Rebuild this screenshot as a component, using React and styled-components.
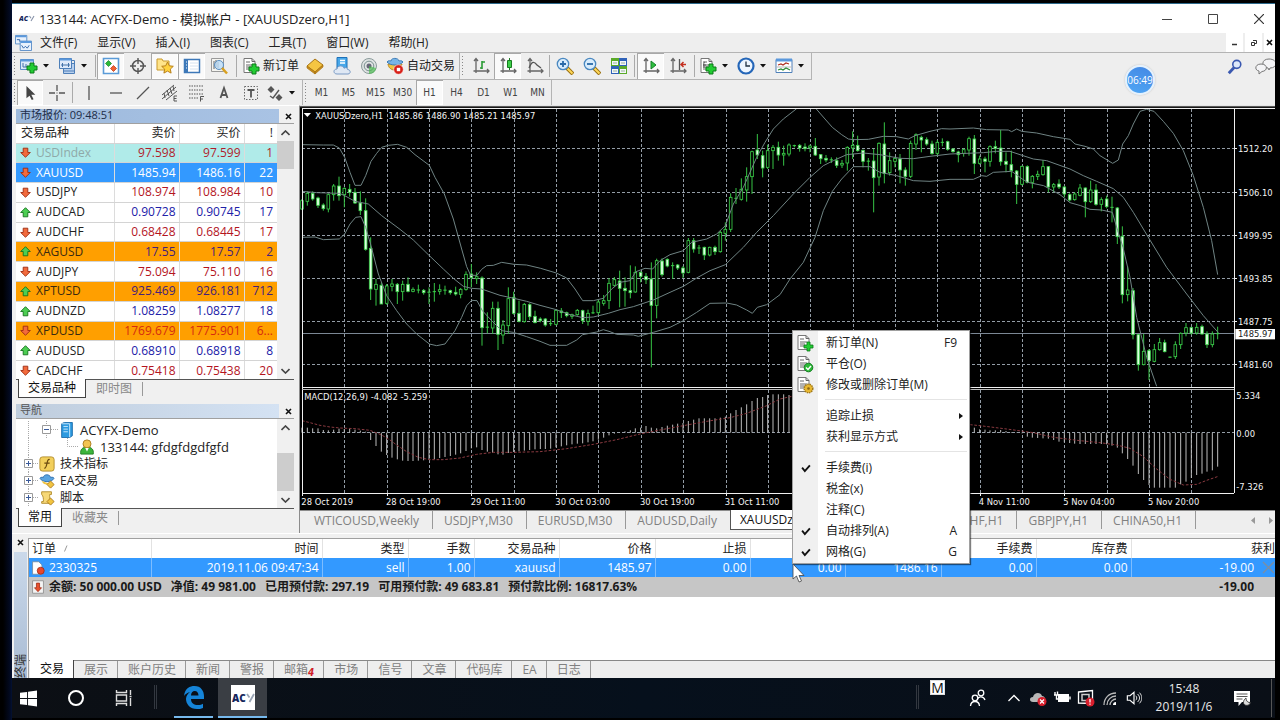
import React from "react";
import styled, { createGlobalStyle, css } from "styled-components";

const UI = `"Open Sans", "Noto Sans", "Noto Sans CJK SC", sans-serif`;
const SMALL = `"DejaVu Sans Condensed", "DejaVu Sans", "Noto Sans CJK SC", sans-serif`;

const Global = createGlobalStyle`
  * { box-sizing: border-box; }
  body { margin: 0; background: #000; font: 12px/16px ${UI}; color: #222; overflow-x: hidden; }
  button { font: inherit; color: inherit; background: none; border: 0; padding: 0; margin: 0; }
  svg { display: block; flex: none; }
  a { color: inherit; text-decoration: none; }
`;

/* ---------- shell ---------- */
const Desktop = styled.div`
  position: relative;
  min-height: 100vh;
  padding: 3px 5px 2px 12px;
  background: linear-gradient(90deg, #000 3px, #020a22 10px, #031133 12px, #000 12px);
  display: flex;
  flex-direction: column;
  overflow: hidden;
`;
const Window = styled.div`
  flex: 1;
  display: flex;
  flex-direction: column;
  background: #f0f0f0;
  border-top: 1px solid #2d6a8c;
  min-width: 0;
`;
const TitleBar = styled.header`
  height: 29px;
  display: flex;
  align-items: center;
  gap: 4px;
  padding-left: 7px;
  background: #fff;
`;
const Title = styled.h1`
  margin: 0;
  flex: 1;
  font: inherit;
  font-size: 13px;
`;
const Captions = styled.div`
  display: flex;
`;
const Caption = styled.button`
  width: 46px;
  height: 28px;
  display: flex;
  align-items: center;
  justify-content: center;
  &:last-child { width: 39px; padding-left: 7px; }
`;
const MenuBar = styled.nav`
  height: 20px;
  display: flex;
  align-items: center;
  gap: 20px;
  padding-left: 3px;
  border-bottom: 1px solid #b4b4b4;
  background: #eee;
  & > svg { margin-right: -12px; }
`;
const ChildCaptions = styled.div`
  margin-left: auto;
  align-self: stretch;
  display: flex;
  gap: 2px;
`;
const ChildCaption = styled.button`
  width: ${(p) => p.$w || 17}px;
  background: #fff;
  display: flex;
  align-items: center;
  justify-content: center;
`;
const ToolRow = styled.div`
  height: ${(p) => p.$h}px;
  display: flex;
  align-items: stretch;
  background: #eee;
`;
const ToolGroup = styled.div`
  display: flex;
  align-items: stretch;
  border-right: 1px solid #b4b4b4;
  border-bottom: ${(p) => (p.$line ? "1px solid #b4b4b4" : "0")};
`;
const Grip = styled.span`
  width: ${(p) => p.$w}px;
  background: radial-gradient(circle, #888 1px, transparent 1px) 1px 3px / 3px 3px repeat-y;
  margin: 2px 0;
`;
const ToolSep = styled.span`
  width: ${(p) => p.$w}px;
  margin: 2px 0;
  background: linear-gradient(#aaa, #aaa) center / 1px 100% no-repeat;
`;
const Tool = styled.button`
  width: ${(p) => p.$w || 27}px;
  display: flex;
  align-items: center;
  justify-content: center;
  ${(p) =>
    p.$on &&
    css`
      background: #fafafa;
      box-shadow: inset 1px 1px 0 #a8a8a8, inset -1px -1px 0 #fff;
    `}
`;
const LabelTool = styled.button`
  display: flex;
  align-items: center;
  gap: 3px;
  padding: 0 ${(p) => p.$px}px;
  white-space: nowrap;
`;
const CaretButton = styled.button`
  width: 16px;
  padding-right: 4px;
  display: flex;
  align-items: center;
  justify-content: center;
`;
const Period = styled(Tool)`
  font: 10px/12px ${SMALL};
  color: #444;
`;
const Corner = styled.div`
  margin-left: auto;
  display: flex;
  align-items: center;
  gap: 12px;
`;

/* ---------- workspace ---------- */
const Workspace = styled.main`
  display: grid;
  grid-template-columns: 288px minmax(0, 1fr);
`;
const Side = styled.aside`
  display: flex;
  flex-direction: column;
  padding: 3px 5px 0 4px;
  border-top: 1px solid #fff;
  border-right: 1px solid #8c8c8c;
`;
const Panel = styled.section`
  display: flex;
  flex-direction: column;
  margin-bottom: 6px;
`;
const PanelHead = styled.div`
  height: 14px;
  display: flex;
  font-size: 11px;
  line-height: 12px;
  color: ${(p) => (p.$active ? "#1c2c48" : "#555")};
`;
const PanelTitle = styled.h2`
  margin: 0;
  flex: 1;
  padding-left: 4px;
  font: inherit;
  background: ${(p) =>
    p.$active ? "linear-gradient(90deg,#9db9dc,#a9c3e4)" : "linear-gradient(90deg,#bfcddd,#d4e2f3)"};
`;
const PanelClose = styled.button`
  width: 15px;
  display: flex;
  align-items: center;
  justify-content: flex-end;
  padding-right: 2px;
`;
const PanelBody = styled.div`
  height: ${(p) => p.$h}px;
  display: flex;
  overflow: hidden;
  background: #fff;
  border-top: 1px solid #a0a0a0;
`;
const Scroller = styled.div`
  width: 17px;
  background: #f0f0f0;
  display: flex;
  flex-direction: column;
  align-items: stretch;
`;
const ScrollArrow = styled.button`
  height: 17px;
  display: flex;
  align-items: center;
  justify-content: center;
`;
const ScrollTrack = styled.div`
  flex: 1;
  padding-top: ${(p) => p.$offset}px;
`;
const ScrollThumb = styled.div`
  height: ${(p) => p.$h}px;
  background: #cdcdcd;
`;
const Quotes = styled.table`
  flex: 1;
  height: 257px;
  table-layout: fixed;
  border-collapse: collapse;
  th, td {
    padding: 0 3px 0 0;
    height: 18px;
    line-height: 16px;
    text-align: right;
    font-weight: 400;
    border-bottom: 1px solid #d4d4d4;
    border-right: 1px solid #dcdcdc;
  }
  th { height: 19px; }
  th:first-child { text-align: left; padding-left: 5px; }
  td:first-child { text-align: left; padding-left: 4px; }
  th:last-child, td:last-child { border-right: 0; padding-right: 4px; }
`;
const SymbolCell = styled.span`
  display: flex;
  align-items: center;
  gap: 5px;
`;
const tones = {
  muted: css`background: #b0ebe9; color: #b01c2c; td:first-child { color: #8fa9a8; }`,
  selected: css`background: #3399ff; color: #fff;`,
  down: css`color: #b4141e; td:first-child { color: #222; }`,
  up: css`color: #2020a8; td:first-child { color: #222; }`,
  goldUp: css`background: #ff9f00; color: #42207a; td:first-child { color: #3a2a10; }`,
  goldDown: css`background: #ff9f00; color: #d42a10; td:first-child { color: #3a2a10; }`,
};
const QuoteRow = styled.tr`
  ${(p) => tones[p.$tone]}
`;
const PanelTabs = styled.div`
  height: 19px;
  display: flex;
  border-top: 1px solid #555;
  padding-left: 2px;
`;
const PanelTab = styled.button`
  padding: 0 ${(p) => (p.$on ? 9 : 10)}px;
  color: #888;
  ${(p) =>
    p.$on
      ? css`
          color: #111;
          background: #fff;
          margin-top: -1px;
          border: 1px solid #444;
          border-top: 0;
        `
      : css`
          margin: 2px 0;
          line-height: 14px;
          border-right: 1px solid #999;
        `}
`;
const Tree = styled.ul`
  list-style: none;
  margin: 0;
  padding: 2px 0 0 6px;
  flex: 1;
`;
const TreeRow = styled.li`
  height: 17px;
  display: flex;
  align-items: center;
  white-space: nowrap;
`;
const TreeLabel = styled.span`
  padding-left: 5px;
  font-size: ${(p) => (p.$account ? 13 : 12)}px;
`;

/* ---------- chart ---------- */
const ChartArea = styled.section`
  background: #000;
  min-width: 0;
  display: flex;
  flex-direction: column;
  & > svg { width: 100%; height: auto; }
`;
const ChartTabs = styled.div`
  height: 23px;
  display: flex;
  background: #eee;
  border-top: 1px solid #8c8c8c;
  padding: 0 0 4px 3px;
`;
const ChartTab = styled.button`
  padding: 0 13px 0 11px;
  color: #808080;
  white-space: nowrap;
  line-height: 20px;
  border-right: 1px solid #999;
  ${(p) =>
    p.$on &&
    css`
      color: #111;
      background: #fff;
      padding: 0 9px;
      border: 1px solid #555;
      border-top: 0;
      margin: -1px 0 -1px -1px;
    `}
`;
const TabSpace = styled.span`
  flex: 1;
`;
const TabArrows = styled.div`
  width: 79px;
  display: flex;
  justify-content: flex-end;
  align-items: center;
  gap: 14px;
  padding-right: 2px;
`;
const ArrowButton = styled.button`
  display: flex;
`;

/* ---------- terminal ---------- */
const Terminal = styled.section`
  flex: 1;
  display: grid;
  grid-template-columns: 16px minmax(0, 1fr);
  padding-top: 4px;
  border-top: 1px solid #fff;
`;
const TerminalSide = styled.div`
  display: flex;
  flex-direction: column;
  align-items: center;
  padding: 1px 0 0 0;
  min-height: 0;
`;
const TerminalStrip = styled.div`
  flex: 1;
  align-self: stretch;
  margin: 6px 1px 0 2px;
  background: linear-gradient(#cbd9ea, #a9bcd4);
  display: flex;
  align-items: flex-end;
  justify-content: center;
  overflow: hidden;
  height: 0;
`;
const Vertical = styled.span`
  writing-mode: vertical-rl;
  text-orientation: sideways;
  transform: rotate(180deg);
  font-size: 12px;
  line-height: 12px;
  color: #333;
`;
const TerminalMain = styled.div`
  display: flex;
  flex-direction: column;
  background: #fff;
  border-top: 1px solid #a0a0a0;
  border-left: 1px solid #a0a0a0;
  min-width: 0;
  overflow: hidden;
`;
const Orders = styled.table`
  width: 100%;
  table-layout: fixed;
  border-collapse: collapse;
  th, td {
    height: 19px;
    padding: 0 3px 0 0;
    text-align: right;
    font-weight: 400;
    line-height: 16px;
    white-space: nowrap;
  }
  th { border-right: 1px solid #e2e2e2; }
  th:first-child { text-align: left; padding-left: 3px; }
  th:last-child { padding: 0; border: 0; }
`;
const OrderRow = styled.tr`
  background: #3399ff;
  color: #fff;
  td { border-right: 1px solid #7dbdff; }
  td:last-child { border: 0; padding: 0; }
`;
const BalanceRow = styled.tr`
  background: #c6c6c6;
  && td { height: 20px; font-weight: 700; color: #1a1a1a; }
  && td:last-child { padding-right: 21px; }
`;
const Inline = styled.span`
  display: flex;
  align-items: center;
  gap: ${(p) => p.$gap}px;
  padding-left: ${(p) => p.$pl || 0}px;
  justify-content: ${(p) => (p.$end ? "flex-end" : "flex-start")};
`;
const TerminalTabs = styled.div`
  margin-top: auto;
  height: 18px;
  display: flex;
  align-items: stretch;
  background: #eee;
  border-top: 1px solid #888;
  padding-left: 1px;
`;
const TerminalTab = styled.button`
  padding: 0 9px 0 10px;
  color: #808080;
  border-right: 1px solid #999;
  line-height: 17px;
  display: flex;
  ${(p) =>
    p.$on &&
    css`
      color: #111;
      background: #fff;
      margin-top: -1px;
      border-right-color: #444;
    `}
`;
const MailCount = styled.sub`
  color: #d01c28;
  font: italic 700 10px/10px ${SMALL};
  align-self: flex-end;
`;

/* ---------- overlays ---------- */
const ContextMenu = styled.div`
  position: absolute;
  left: 792px;
  top: 330px;
  width: 178px;
  border: 1px solid #a0a0a0;
  background: linear-gradient(90deg, #f0f0f0 25px, #fff 25px);
  box-shadow: 1px 1px 1px rgba(0, 0, 0, 0.5);
  padding: 1px 0;
`;
const MenuItem = styled.button`
  width: 100%;
  height: 21px;
  display: grid;
  grid-template-columns: 25px 1fr auto;
  align-items: center;
  text-align: left;
  padding-right: ${(p) => (p.$sub ? 6 : 12)}px;
  & > svg { justify-self: center; }
`;
const MenuLabel = styled.span`
  padding-left: 8px;
`;
const MenuRule = styled.hr`
  margin: 4px 2px 5px 32px;
  border: 0;
  height: 1px;
  background: #e4e4e4;
`;
const Timer = styled.div`
  position: absolute;
  left: 1125px;
  top: 65px;
  width: 30px;
  height: 30px;
  border-radius: 50%;
  border: 2px solid #e4f1fd;
  background: linear-gradient(200deg, #4488e4, #4fa6f4);
  box-shadow: 0 0 2px #bbb;
  color: #fff;
  font-size: 10px;
  line-height: 27px;
  text-align: center;
`;
const Pointer = styled.div`
  position: absolute;
  left: 792px;
  top: 563px;
`;

/* ---------- taskbar ---------- */
const Taskbar = styled.footer`
  height: 40px;
  display: flex;
  align-items: stretch;
  background: linear-gradient(90deg, #0c0f14, #06101c 50%, #0a0f17);
  color: #e8e8e8;
`;
const TaskButton = styled.button`
  width: ${(p) => p.$w}px;
  display: flex;
  align-items: center;
  justify-content: center;
  background: ${(p) => (p.$on ? "#3a3e44" : "none")};
  border-bottom: ${(p) => (p.$run ? "2px solid #76b9ed" : "0")};
  margin-left: ${(p) => p.$ml || 0}px;
`;
const TaskDivider = styled.span`
  width: 3px;
  align-self: stretch;
  margin: 7px 0 9px ${(p) => p.$ml || 0}px;
  border: solid #333840;
  border-width: 0 1px;
`;
const Tray = styled.div`
  margin-left: auto;
  display: flex;
  align-items: center;
`;
const TrayButton = styled.button`
  width: 24px;
  height: 38px;
  display: flex;
  align-items: center;
  justify-content: center;
`;
const TraySpace = styled.span`
  width: 12px;
`;
const NoticeButton = styled(TrayButton)`
  width: 50px;
  padding-right: 10px;
  margin-right: 3px;
  border-right: 1px solid #555;
`;
const ImeBadge = styled.span`
  align-self: flex-start;
  margin: 2px 21px 0 11px;
  width: 15px;
  height: 15px;
  background: #fff;
  border: 1px solid #ddd;
  color: #111;
  font-size: 14px;
  line-height: 13px;
  text-align: center;
`;
const Clock = styled.time`
  width: 76px;
  text-align: center;
  line-height: 18px;
`;

/* ---------- icons ---------- */
const I = ({ s = 18, children, ...r }) => (
  <svg width={s} height={s} viewBox="0 0 18 18" fill="none" aria-hidden="true" {...r}>
    {children}
  </svg>
);
const Plus = ({ x = 6, y = 6 }) => (
  <path transform={`translate(${x} ${y})`} d="M4 1h4v3h3v4H8v3H4V8H1V4h3z" fill="#22cc33" stroke="#0a7a18" />
);
const Axes = () => <path d="M4 2v14M1.500 14h15M2 4l2-2.500L6 4M15 12l2 2-2 2" stroke="#666" strokeWidth="1.300" />;
const Page = () => (
  <>
    <path d="M2 1.500h8l3 3v11H2z" fill="#fff" stroke="#777" />
    <path d="M10 1.500v3h3M4 5h4M4 8h7M4 10h5M4 12h4" stroke="#666" />
  </>
);
const Caret = () => (
  <svg width="6" height="4" viewBox="0 0 6 4"><path d="M0 0h6L3 3.500z" fill="#111" /></svg>
);
const SmallX = () => (
  <svg width="7" height="7" viewBox="0 0 7 7"><path d="M1 1l5 5M6 1L1 6" stroke="#111" strokeWidth="1.600" /></svg>
);
const Chevron = ({ up, color = "#444" }) => (
  <svg width="9" height="6" viewBox="0 0 9 6" fill="none">
    <path d={up ? "M.5 5l4-4 4 4" : "M.5 1l4 4 4-4"} stroke={color} strokeWidth="1.600" />
  </svg>
);
const NewChart = () => (
  <I>
    <path d="M.5 2.500h13v10H.5z" fill="#dbe9fa" stroke="#5a8ec8" /><path d="M.5 2.500h13v2H.5z" fill="#5a98dc" />
    <path d="M3 6v4h5M6 7v3" stroke="#4472a8" /><Plus x={6} y={5} />
  </I>
);
const Profiles = () => (
  <I>
    <path d="M5.500 6.500h11v10h-11z" fill="#b8d0ee" stroke="#4e7fb8" /><path d="M5.500 14h11M14 3.500h2.500v12" stroke="#4e7fb8" />
    <path d="M1.500 1.500h12v10h-12z" fill="#dfeafa" stroke="#4e7fb8" /><path d="M1.500 2.500h12" stroke="#5a98dc" strokeWidth="2" />
    <path d="M3 8h9M4.500 6v4M10.500 6v4" stroke="#4472a8" />
  </I>
);
const Watch = () => (
  <I>
    <path d="M1.500 1.500h15v15h-15z" fill="#fff" stroke="#5a9bd8" strokeWidth="1.600" />
    <path d="M6.500 3.500l3 3-3 3-3-3z" fill="#2cb838" stroke="#14802a" strokeWidth=".7" />
    <path d="M11.500 8.500l3 3-3 3-3-3z" fill="#f06030" stroke="#b83010" strokeWidth=".7" />
  </I>
);
const Target = () => (
  <I><circle cx="9" cy="9" r="5.500" stroke="#555" strokeWidth="1.500" /><path d="M9 1v6M9 11v6M1 9h6M11 9h6" stroke="#555" strokeWidth="1.400" /></I>
);
const starPath = "M11.500 5l1.800 3.800 4 .5-3 2.800.8 4-3.600-2-3.600 2 .8-4-3-2.800 4-.5z";
const FolderStar = () => (
  <I><path d="M1 2h5l1 2h6v9H1z" fill="#ffe48a" stroke="#c9992a" /><path d={starPath} fill="#ffd23e" stroke="#b8801a" /></I>
);
const TerminalIcon = () => (
  <I><path d="M1.500 2.500h15v13h-15z" fill="#fff" stroke="#3d78b8" strokeWidth="1.500" /><path d="M2 3h3v12H2z" fill="#3d78b8" /><path d="M7 6h8M7 9h8M7 12h8" stroke="#d4e2f0" /><path d="M3 5h1M3 8h1M3 11h1" stroke="#fff" /></I>
);
const Tester = () => (
  <I><path d="M1.500 1.500h12v13h-12z" fill="#f4f4f0" stroke="#999" /><path d="M4 4v8M6 3v7M8 5v6" stroke="#666" /><circle cx="9" cy="8" r="4.500" fill="#bcdcf8" fillOpacity=".8" stroke="#5a8ec0" /><path d="M12 11l5 5.500" stroke="#d8a020" strokeWidth="2.500" /></I>
);
const NewOrder = () => (<I><Page /><Plus /></I>);
const Gold = () => (
  <I><path d="M1 9l8-7 8 6-8 7z" fill="#f5c542" stroke="#a87414" /><path d="M1 9l8 6v2L1 11zM9 15l8-7v2l-8 7z" fill="#c98d1c" stroke="#a87414" strokeWidth=".7" /></I>
);
const CloudServer = () => (
  <I><path d="M4 .5h10v11H4z" fill="#48a8ea" stroke="#1c70b8" /><path d="M7 3.500h5M7 6h5" stroke="#fff" strokeWidth="1.300" /><path d="M4 17c-4 0-4-5 0-5 .5-4 6-4 7-.8 2-1.500 4 .3 3.500 1.300 3.500 0 3.500 4.500.5 4.500z" fill="#dfe8f4" stroke="#7a9ac4" /></I>
);
const Signal = () => (
  <I><circle cx="9" cy="9" r="7.500" fill="#dfe3e3" stroke="#8a9a9a" /><circle cx="9" cy="9" r="4.800" stroke="#7a9090" /><circle cx="9" cy="9" r="2.500" fill="#667" /><path d="M9 9v8c4 0 7-3 7-6z" fill="#4bbb50" fillOpacity=".7" /></I>
);
const AutoTrade = () => (
  <I>
    <path d="M2 7c1 8 12 8 14 0z" fill="#f2c440" stroke="#b8861c" /><path d="M1 5c3 4 13 4 16 0-1-2-4-1-4-1-.5-3.500-8-3.500-8 0 0 0-3-1-4 1z" fill="#78b4e6" stroke="#3c7cb8" />
    <circle cx="12.500" cy="12.500" r="4.800" fill="#d82018" stroke="#fff" strokeWidth=".6" /><path d="M10.800 10.800h3.400v3.400h-3.400z" fill="#fff" />
  </I>
);
const BarChart = () => (<I><Axes /><path d="M10 4v8M10 5h3M8 11h2" stroke="#2a9a34" strokeWidth="1.600" /></I>);
const CandleChart = () => (<I><Axes /><path d="M10.500 1v12" stroke="#177a20" /><path d="M8.500 3.500h4v7h-4z" fill="#3ccf48" stroke="#177a20" /></I>);
const LineChart = () => (<I><Axes /><path d="M3 11c3-7 5-7 8-3l4 3" stroke="#555" strokeWidth="1.300" /></I>);
const Magnifier = ({ plus }) => (
  <I><path d="M11 11l6 6" stroke="#9a7010" strokeWidth="4" /><path d="M11.500 11.500l5 5" stroke="#ffd85a" strokeWidth="2" /><circle cx="7" cy="7" r="5.700" fill="#d8ecfc" stroke="#4a88c0" strokeWidth="1.300" /><path d={plus ? "M4 7h6M7 4v6" : "M4 7h6"} stroke="#2a6aa8" strokeWidth="1.800" /></I>
);
const Tile = () => (
  <I><path d="M1 1h8v8H1zM9 9h8v8H9z" fill="#5aaa28" /><path d="M9 1h8v8H9zM1 9h8v8H1z" fill="#2f62b8" /><path d="M2 4h6v4H2zM10 4h6v4h-6zM2 12h6v4H2zM10 12h6v4h-6z" fill="#f2f6fa" /><path d="M3 6h4M11 6h4M3 14h4M11 14h4" stroke="#9bb09b" /></I>
);
const AutoScroll = () => (<I><Axes /><path d="M9 4l5 4-5 4z" fill="#2cbe3c" stroke="#16802a" /></I>);
const Shift = () => (<I><Axes /><path d="M10.500 2v11" stroke="#555" strokeWidth="1.300" /><path d="M17 7.500h-5M14.500 5L12 7.500l2.500 2.500" stroke="#c43020" strokeWidth="1.500" /></I>);
const Indicators = () => (<I><Page /><path d="M6 5c-2 0-1 4-1 6M4 8h3" stroke="#555" /><Plus /></I>);
const ClockIcon = () => (<I><circle cx="9" cy="9" r="7.500" fill="#eef6ff" stroke="#2466b8" strokeWidth="2.200" /><path d="M9 4.500V9h4" stroke="#234" strokeWidth="1.300" /></I>);
const Template = () => (
  <I><path d="M1 2.500h16v13H1z" fill="#fff" stroke="#4e7fb8" /><path d="M1 3h16" stroke="#5a98dc" strokeWidth="3" /><path d="M3 8l3-1 2 1 3-2 3 1" stroke="#b03020" strokeWidth="1.200" /><path d="M1 10h16" stroke="#bbb" /><path d="M3 13l3-1 2 1 3-2 4 2" stroke="#2a8a34" strokeWidth="1.200" /></I>
);
const CursorIcon = () => (<I s={16}><path d="M5 1v14l3.500-3 2.500 5 2-1-2.500-5H15z" fill="#444" /></I>);
const CrossIcon = () => (<I><path d="M9 1v6M9 11v6M1 9h6M11 9h6" stroke="#555" strokeWidth="1.300" /><path d="M8.500 9h1" stroke="#555" /></I>);
const Stroke = ({ d }) => (<I><path d={d} stroke="#555" strokeWidth="1.300" /></I>);
const Channel = () => (
  <I><path d="M1 11L13 1M1 15L15 3M5 16L16 7M3 9l1 5M6 6l2 6M9 4l2 6M12 2l1 5" stroke="#555" /><path d="M16 12h-3v5h3M13 14.500h2.500" stroke="#555" /></I>
);
const Fibo = () => (
  <I><path d="M1 2h15M1 6h15M1 10h15M1 14h9" stroke="#555" strokeDasharray="1.500 1" /><path d="M16 12.500h-3.500v5M12.500 15H15" stroke="#555" /></I>
);
const TextA = () => (<I><path d="M5.500 14L9 4l3.500 10M6.800 11h4.400" stroke="#555" strokeWidth="1.800" /></I>);
const TextT = () => (<I><path d="M2.500 2.500h13v13h-13z" stroke="#666" strokeDasharray="1.500 1.500" /><path d="M5.500 6h7M9 6v7.500" stroke="#555" strokeWidth="1.800" /></I>);
const Arrows = () => (<I><path d="M5 2l3.500 3.500L5 9 1.500 5.500zM13 10l3.500 3.500L13 17l-3.500-3.500z" fill="#555" /><path d="M4 12l3 2 6-8" stroke="#555" strokeWidth="1.400" /></I>);
const Quote = ({ up }) => (
  <svg width="11" height="11" viewBox="0 0 11 11" aria-hidden="true">
    {up ? (
      <path d="M5.500.7l4.800 4.800H7.800v4.300H3.200V5.500H.7z" fill="#4cce52" stroke="#14701c" strokeWidth=".9" />
    ) : (
      <path d="M5.500 10.300L.7 5.500h2.500V1.200h4.600v4.300h2.500z" fill="#f26a3c" stroke="#9c2a10" strokeWidth=".9" />
    )}
  </svg>
);
const LogoMark = ({ w, h }) => (
  <svg width={w} height={h} viewBox="0 0 32 14" aria-label="ACY" fill="none">
    <text x="0" y="12" fontFamily="Open Sans" fontWeight="800" fontStyle="italic" fontSize="14" fill="#16265c">AC</text>
    <path d="M21 2l3 4.500M30 2l-6 10" stroke="#8792a8" strokeWidth="2.200" />
  </svg>
);
const Expander = ({ minus }) => (
  <svg width="13" height="17" viewBox="0 0 13 17" fill="none">
    <path d="M4.500 0v17M9 8.500h4" stroke="#aaa" strokeDasharray="1 1" />
    <path d="M.5 4.500h8v8h-8z" fill="#fff" stroke="#9a9a9a" />
    <path d={minus ? "M2 8.500h5" : "M2 8.500h5M4.500 6v5"} stroke="#3a5a9a" />
  </svg>
);
const Branch = ({ w, d }) => (
  <svg width={w} height="17" viewBox={`0 0 ${w} 17`} fill="none"><path d={d} stroke="#aaa" strokeDasharray="1 1" /></svg>
);
const ServerIcon = () => (
  <I s={16}><path d="M3 2l3-1.500h9v15L12 17.500H3z" fill="#2c9ae0" stroke="#1668a8" /><path d="M3 2h9v15M5 5h5M5 8h5M5 11h5" stroke="#d4eeff" /></I>
);
const PersonIcon = () => (
  <I s={16}><path d="M2 17c-1-5 2-8 7-8s8 3 7 8z" fill="#3cb43c" stroke="#1c7a20" /><circle cx="9" cy="5.500" r="4.500" fill="#f2c452" stroke="#a8781a" /><path d="M7 10l2 4 2-4" fill="#fff" /></I>
);
const FunctionIcon = () => (
  <I s={16}><rect x="1" y="1" width="16" height="16" rx="3" fill="#f2cf5c" stroke="#b08a28" /><path d="M12 4c-4-1-2 9-6 10M6 8h6" stroke="#6a4a10" strokeWidth="1.400" /></I>
);
const ExpertIcon = () => (
  <I s={16}><path d="M1 6c3 5 13 5 16 0-1-2-4-1-4-1-.5-4-8-4-8 0 0 0-3-1-4 1z" fill="#5aa4e0" stroke="#2c6cac" /><path d="M3 9c2 4 5 5 9 3z" fill="#f2c440" /><path d="M13 9l4 4-4 4-4-4z" fill="#f2c440" stroke="#a8781a" /></I>
);
const ScriptIcon = () => (
  <I s={16}><path d="M3 2h11v3h-2c0 4 0 6 2 8v2H3v-2h2c0-3 0-6-2-8z" fill="#f6d878" stroke="#b08a28" /><path d="M13 9l4 4-4 4-4-4z" fill="#f2c440" stroke="#a8781a" /></I>
);
const MenuPage = ({ kind }) => (
  <svg width="18" height="18" viewBox="1 0 18 18" fill="none">
    <Page />
    {kind === "add" && <path d="M11 8h3v3h3v3h-3v3h-3v-3H8v-3h3z" fill="#22cc33" stroke="#0a7a18" strokeWidth=".8" />}
    {kind === "close" && (<><circle cx="12.500" cy="12.500" r="4.300" fill="#2cba38" stroke="#0f7a1c" /><path d="M10 12.500l2 2 3-3.500" stroke="#fff" strokeWidth="1.500" /></>)}
    {kind === "edit" && (<><circle cx="12.500" cy="12.500" r="4.300" fill="#e8b830" stroke="#a07818" strokeDasharray="1.500 .8" strokeWidth="1.500" /><circle cx="12.500" cy="12.500" r="1.300" fill="#8a6410" /></>)}
  </svg>
);
const CheckMark = () => (<I s={14}><path d="M4 8.500l3.500 4.500L14 5.500" stroke="#111" strokeWidth="2.400" /></I>);
const SubArrow = () => (<svg width="4" height="6" viewBox="0 0 4 6"><path d="M0 0l4 3-4 3z" fill="#111" /></svg>);

/* ---------- chart data (three units to a pixel) ---------- */
const STEP = 15.88;
const bx = (i) => Math.round(6 + STEP * i);
// high, body top, body bottom, low, direction (1 = up)
const candles = [
  [285,290,315,318,1],[262,268,292,305,1],[262,268,285,290,0],[278,282,304,312,0],[298,303,314,320,0],[268,272,315,325,1],[240,246,272,290,1],[218,246,275,290,0],[250,253,272,310,1],[240,256,265,278,0],
  [252,265,297,300,0],[262,297,320,333,0],[283,320,436,440,0],[400,433,555,588,0],[525,541,556,605,1],[535,544,600,600,0],[540,546,598,602,1],[525,540,547,562,1],[537,541,563,600,0],[530,541,563,590,1],
  [520,541,562,565,0],[550,556,562,565,1],[542,556,560,568,0],[555,559,566,572,0],[550,563,566,600,1],[537,562,564,593,1],[541,557,562,572,1],[545,557,560,572,0],[557,560,566,572,0],[548,565,570,575,0],
  [552,556,571,583,1],[502,511,556,560,1],[480,510,521,550,0],[505,518,524,540,1],[517,522,671,725,0],[625,668,671,688,0],[593,613,672,690,1],[593,613,691,738,0],[648,663,693,720,1],[550,584,665,690,1],
  [563,580,628,632,0],[590,628,652,655,0],[597,601,653,656,1],[598,602,638,648,0],[620,637,656,658,0],[640,645,650,655,0],[642,645,663,668,0],[645,657,661,666,1],[617,619,661,664,1],[612,621,626,642,0],
  [623,626,635,640,0],[629,632,637,645,1],[615,619,632,635,1],[617,620,650,660,0],[617,628,652,665,1],[605,625,628,630,1],[585,594,626,632,1],[573,590,598,605,1],[522,538,590,615,1],[519,527,544,548,1],
  [500,531,553,610,0],[520,553,560,608,0],[484,560,566,583,0],[487,505,564,566,1],[502,505,517,535,0],[507,517,527,540,0],[475,525,604,790,0],[464,470,604,643,1],[463,471,512,518,0],[463,466,486,490,0],
  [475,484,486,525,0],[480,483,492,498,0],[486,492,507,522,0],[402,410,505,508,1],[402,410,435,446,0],[423,430,434,450,1],[428,430,453,468,0],[428,430,453,457,1],[425,430,443,453,0],[380,385,443,446,1],
  [355,376,388,410,1],[268,280,376,384,1],[252,281,285,300,0],[223,256,286,290,1],[190,218,258,293,1],[140,143,218,270,1],[90,138,153,165,0],[140,155,192,220,0],[122,140,190,195,1],[123,130,140,195,1],
  [113,130,153,170,0],[125,148,153,185,1],[118,123,150,157,1],[122,123,127,130,1],[120,124,132,143,0],[118,129,134,142,0],[122,126,131,145,1],[102,127,153,156,0],[150,152,164,180,0],[153,163,168,175,0],
  [160,166,169,177,0],[160,170,184,192,0],[168,178,183,192,1],[127,130,177,200,1],[82,124,132,165,1],[95,124,140,143,0],[137,139,172,190,0],[162,170,173,200,0],[135,171,221,325,0],[115,118,219,245,1],
  [55,120,208,238,0],[145,170,206,215,1],[158,163,172,190,1],[150,165,198,238,0],[190,198,217,245,0],[110,118,217,222,1],[88,92,120,138,1],[95,100,108,145,0],[100,107,120,125,0],[110,120,149,152,0],
  [108,115,148,157,1],[103,113,117,127,1],[110,113,136,140,0],[133,135,143,146,0],[140,144,152,175,0],[133,137,148,158,1],[98,104,138,155,1],[93,105,178,210,0],[155,165,178,182,1],[158,165,172,205,0],
  [124,128,172,188,1],[110,128,133,148,0],[78,132,173,185,0],[145,172,181,205,0],[140,182,200,220,0],[198,201,241,300,0],[185,187,241,244,1],[184,188,235,238,0],[213,217,235,253,1],[200,211,217,228,1],
  [168,188,212,215,1],[186,188,249,265,0],[237,242,249,265,1],[226,240,249,255,0],[246,249,270,280,0],[268,272,288,292,0],[265,270,287,290,1],[240,252,274,277,1],[250,252,293,340,0],[230,258,293,297,1],
  [240,258,301,305,0],[280,287,301,322,1],[275,285,308,313,0],[278,308,312,355,0],[309,312,398,420,0],[367,397,572,598,0],[487,558,572,592,1],[552,560,692,706,0],[690,692,782,800,0],[690,742,782,784,1],
  [735,740,770,828,0],[720,737,772,775,1],[702,716,737,740,1],[707,716,743,745,0],[758,758,761,761,1],[712,722,758,765,1],[685,688,722,735,1],[657,671,687,697,1],[668,671,687,692,0],[657,670,687,692,1],
  [662,668,690,692,0],[682,690,722,732,0],[682,690,722,730,1],[668,688,690,706,1],
];
const bands = [
  "6,122 70,123 100,123 118,132 134,160 150,205 165,244 183,244 197,215 213,172 230,148 245,130 265,124 293,121 320,130 345,152 388,184 405,220 433,270 460,345 485,435 500,488 512,514 531,514 545,496 560,485 580,484 605,475 642,481 680,483 722,493 769,507 800,522 825,555 848,590 880,590 910,583 935,555 960,535 990,530 1008,503 1035,493 1058,495 1080,470 1110,452 1150,440 1175,415 1220,405 1250,390 1276,365 1300,300 1330,250 1370,160 1395,115 1420,75 1450,45 1490,14",
  "1548,14 1575,45 1597,70 1625,92 1645,105 1660,107 1705,106 1750,97 1790,98 1825,105 1845,95 1890,82 1925,74 1950,75 2020,72 2060,77 2125,78 2135,83 2150,75 2165,82 2210,87 2260,98 2310,106 2325,120 2355,127 2380,135 2400,155 2438,178 2455,168 2468,120 2485,95 2500,60 2520,22 2540,16 2562,22 2590,52 2620,88 2650,140 2680,215 2710,310 2735,410 2753,512",
  "6,262 50,266 118,268 134,275 165,292 205,300 245,335 300,376 340,408 388,455 430,495 460,523 490,547 515,553 545,555 600,574 642,583 680,592 720,604 769,617 810,632 848,641 880,639 925,628 960,617 1000,608 1060,588 1110,565 1150,547 1190,522 1230,500 1276,482 1330,430 1370,385 1420,335 1480,270 1530,220 1570,185 1600,170 1640,152 1690,147 1740,152 1800,163 1840,164 1890,157 1950,150 2050,146 2090,142 2130,142 2160,152 2200,165 2240,170 2310,195 2350,215 2390,232 2440,254 2470,280 2500,325 2548,405 2600,490 2660,570 2710,635 2755,686",
  "6,400 45,399 70,407 118,405 134,390 150,360 167,340 183,338 197,370 213,425 235,510 260,575 290,620 320,660 350,690 388,720 410,725 435,720 465,680 485,640 500,605 515,589 531,590 547,620 575,650 605,680 640,685 680,698 720,712 750,724 800,724 830,708 848,692 890,684 910,677 930,683 950,691 1000,693 1015,697 1060,685 1110,670 1150,650 1190,625 1230,598 1280,597 1310,603 1340,618 1357,628 1372,610 1400,602 1440,572 1470,525 1510,475 1545,400 1570,320 1597,262 1625,225 1660,188 1710,188 1740,205 1790,215 1840,230 1890,232 1950,226 2020,226 2045,215 2060,217 2080,205 2135,202 2167,225 2183,235 2231,245 2280,272 2310,296 2342,305 2370,316 2405,318 2437,325 2453,380 2469,430 2490,520 2510,640 2540,760 2570,847",
];
const macdLeft = [128,128,130,130,135,136,134,131,132,132,134,137,140,165,183,200,210,218,223,227,228,228,227,226,224,222,219,216,213,209,205,198,190,187,195,200,203,208,209,204,201,199,197,195,193,192,192,191,187,184,181,178,176,175,172,169,164,158,151,146,142,139,136,130,128,123,128,130,126,122,119,116,114,108,104,100,100,100,100,98,95,85,75,67,58,48,39,36,30,28,28,28,30];
const macdRight = [128,133,134,136,136,135,138,141,142,145,155,158,159,160,161,165,170,172,174,176,177,177,177,177,177,178,182,188,205,222,242,267,285,300,308,308,308,308,308,298,290,279,270,266,260,256,245];
const macd = [...macdLeft.map((v, i) => [i, v]), ...macdRight.map((v, i) => [i + 127, v])];
const signals = [
  "6,107 30,113 60,121 90,126 120,129 165,131 210,136 245,150 270,165 290,180 320,200 355,217 388,224 430,224 480,219 530,208 580,202 640,202 720,200 800,191 880,178 950,164 1020,147 1090,133 1150,122 1220,109 1290,98 1340,85 1400,62 1440,42 1480,33",
  "2010,119 2040,122 2120,132 2200,143 2260,157 2340,167 2400,173 2450,180 2490,190 2530,215 2570,252 2610,283 2650,300 2690,298 2720,286 2755,274",
];
const prices = [["1512.20", 134], ["1506.10", 264], ["1499.95", 393], ["1493.85", 523], ["1487.75", 651], ["1481.60", 781]];
const times = [
  ["28 Oct 2019", 0], ["28 Oct 19:00", 1], ["29 Oct 11:00", 2], ["30 Oct 03:00", 3], ["30 Oct 19:00", 4], ["31 Oct 11:00", 5],
  ["4 Nov 11:00", 8], ["5 Nov 04:00", 9], ["5 Nov 20:00", 10],
];
const gx = (k) => Math.round(7 + 127.05 * k);

const ChartLabel = styled.text`
  font-family: ${SMALL};
  font-size: 28px;
  fill: ${(p) => p.$fill || "#f4f4f4"};
`;

function PriceChart() {
  return (
    <svg viewBox="0 3 2925 1215" role="img" aria-label="XAUUSDzero H1" fill="none">
      <rect x="0" y="3" width="2925" height="1215" fill="#000" />
      <path d="M0 4.500h2925" stroke="#e4e4e4" strokeWidth="3" />
      <path d="M0 8h2925" stroke="#5a5a5a" strokeWidth="4" />
      <g stroke="#939ca6" strokeWidth="3" strokeDasharray="9 6" shapeRendering="crispEdges">
        {Array.from({ length: 21 }, (_, k) => (
          <path key={k} d={`M${gx(k + 1)} 14V849M${gx(k + 1)} 858V1166`} />
        ))}
        {prices.map(([t, y]) => <path key={t} d={`M6 ${y}H2803`} />)}
        <path d="M6 986H2803" />
      </g>
      <path d="M6 689H2803" stroke="#7b8794" strokeWidth="3" shapeRendering="crispEdges" />
      {candles.map(([h, t, b, l, up], i) => (
        <g key={i}>
          <path d={`M${bx(i)} ${h}V${l}`} stroke="#36c445" strokeWidth="3" />
          {b - t < 5 ? (
            <path d={`M${bx(i) - 5} ${(t + b) / 2}h10`} stroke="#3bd04a" strokeWidth="3" />
          ) : (
            <rect x={bx(i) - 4} y={t} width="8" height={b - t} fill={up ? "#000" : "#dcffe0"} stroke="#3bd04a" strokeWidth="2.500" />
          )}
        </g>
      ))}
      <g stroke="#6f8383" strokeWidth="3" strokeLinejoin="round">
        {bands.map((p, i) => <polyline key={i} points={p} />)}
      </g>
      <g transform="translate(0 843)">
        {macd.map(([i, v]) => <path key={i} d={`M${bx(i)} 143V${v}`} stroke="#bcbcbc" strokeWidth="3" />)}
        {signals.map((p, i) => <polyline key={i} points={p} stroke="#8a3a40" strokeWidth="3" strokeDasharray="8 5" />)}
      </g>
      <g stroke="#f0f0f0" strokeWidth="3" shapeRendering="crispEdges">
        <path d="M6 13H2925M6 13V1167M2803 13V1167M6 1167H2803" />
        <path d="M6 850H2803" strokeWidth="3" /><path d="M6 856H2803" stroke="#b8b8b8" />
        {prices.map(([t, y]) => <path key={t} d={`M2803 ${y}h8`} />)}
        {times.map(([t, k]) => <path key={t} d={`M${gx(k * 2)} 1167v8`} />)}
      </g>
      <path d="M11 27h22l-11 12z" fill="#fff" />
      <ChartLabel x="46" y="45">XAUUSDzero,H1 {"\u00a0"}1485.86 1486.90 1485.21 1485.97</ChartLabel>
      <ChartLabel x="13" y="889">MACD(12,26,9) -4.082 -5.259</ChartLabel>
      {prices.map(([t, y]) => <ChartLabel key={t} x="2814" y={y + 11}>{t}</ChartLabel>)}
      <rect x="2806" y="675" width="119" height="31" fill="#fff" />
      <ChartLabel x="2814" y="700" $fill="#222">1485.97</ChartLabel>
      <ChartLabel x="2809" y="886">5.334</ChartLabel>
      <ChartLabel x="2809" y="998">0.00</ChartLabel>
      <ChartLabel x="2809" y="1159">-7.326</ChartLabel>
      {times.map(([t, k]) => <ChartLabel key={t} x={4 + k * 254} y="1202">{t}</ChartLabel>)}
    </svg>
  );
}

/* ---------- content ---------- */
const quotes = [
  ["USDIndex", "97.598", "97.599", "1", 0, "muted"],
  ["XAUUSD", "1485.94", "1486.16", "22", 0, "selected"],
  ["USDJPY", "108.974", "108.984", "10", 0, "down"],
  ["AUDCAD", "0.90728", "0.90745", "17", 1, "up"],
  ["AUDCHF", "0.68428", "0.68445", "17", 0, "down"],
  ["XAGUSD", "17.55", "17.57", "2", 1, "goldUp"],
  ["AUDJPY", "75.094", "75.110", "16", 0, "down"],
  ["XPTUSD", "925.469", "926.181", "712", 1, "goldUp"],
  ["AUDNZD", "1.08259", "1.08277", "18", 1, "up"],
  ["XPDUSD", "1769.679", "1775.901", "6...", 0, "goldDown"],
  ["AUDUSD", "0.68910", "0.68918", "8", 1, "up"],
  ["CADCHF", "0.75418", "0.75438", "20", 0, "down"],
];
const menus = ["文件(F)", "显示(V)", "插入(I)", "图表(C)", "工具(T)", "窗口(W)", "帮助(H)"];
const periods = ["M1", "M5", "M15", "M30", "H1", "H4", "D1", "W1", "MN"];
const orderHeads = ["时间", "类型", "手数", "交易品种", "价格", "止损", "", "", "手续费", "库存费", "获利"];
const orderCells = ["2019.11.06 09:47:34", "sell", "1.00", "xauusd", "1485.97", "0.00", "0.00", "1486.16", "0.00", "0.00"];
const balance = ["余额: 50 000.00 USD", "净值: 49 981.00", "已用预付款: 297.19", "可用预付款: 49 683.81", "预付款比例: 16817.63%"];
const terminalTabs = ["交易", "展示", "账户历史", "新闻", "警报", "邮箱", "市场", "信号", "文章", "代码库", "EA", "日志"];
const contextItems = [
  { label: "新订单(N)", hint: "F9", icon: <MenuPage kind="add" /> },
  { label: "平仓(O)", icon: <MenuPage kind="close" /> },
  { label: "修改或删除订单(M)", icon: <MenuPage kind="edit" /> },
  null,
  { label: "追踪止损", sub: true },
  { label: "获利显示方式", sub: true },
  null,
  { label: "手续费(i)", icon: <CheckMark /> },
  { label: "税金(x)" },
  { label: "注释(C)" },
  { label: "自动排列(A)", hint: "A", icon: <CheckMark /> },
  { label: "网格(G)", hint: "G", icon: <CheckMark /> },
];

function Scrollbar({ offset, thumb }) {
  return (
    <Scroller>
      <ScrollArrow aria-label="向上"><Chevron up /></ScrollArrow>
      <ScrollTrack $offset={offset}><ScrollThumb $h={thumb} /></ScrollTrack>
      <ScrollArrow aria-label="向下"><Chevron /></ScrollArrow>
    </Scroller>
  );
}

function Drop({ label, icon }) {
  return (
    <>
      <Tool $w={22} aria-label={label}>{icon}</Tool>
      <CaretButton aria-label={label + "菜单"}><Caret /></CaretButton>
    </>
  );
}

function Toolbars() {
  return (
    <>
      <ToolRow $h={27}>
        <ToolGroup $line>
          <Grip $w={6} />
          <Drop label="新图表" icon={<NewChart />} />
          <Drop label="配置" icon={<Profiles />} />
          <ToolSep $w={3} />
          <Tool $on aria-label="市场报价"><Watch /></Tool>
          <Tool aria-label="数据窗口"><Target /></Tool>
          <Tool $on aria-label="导航"><FolderStar /></Tool>
          <Tool $on aria-label="终端"><TerminalIcon /></Tool>
          <Tool aria-label="策略测试"><Tester /></Tool>
          <ToolSep $w={8} />
          <LabelTool $px={2}><NewOrder />新订单</LabelTool>
          <Tool aria-label="编辑器"><Gold /></Tool>
          <Tool aria-label="云服务"><CloudServer /></Tool>
          <Tool aria-label="信号"><Signal /></Tool>
          <LabelTool $px={4}><AutoTrade />自动交易</LabelTool>
        </ToolGroup>
        <ToolGroup $line>
          <Grip $w={7} />
          <Tool aria-label="柱状图"><BarChart /></Tool>
          <Tool $on aria-label="蜡烛图"><CandleChart /></Tool>
          <Tool aria-label="折线图"><LineChart /></Tool>
          <ToolSep $w={3} />
          <Tool aria-label="放大"><Magnifier plus /></Tool>
          <Tool aria-label="缩小"><Magnifier /></Tool>
          <Tool aria-label="平铺"><Tile /></Tool>
          <ToolSep $w={5} />
          <Tool $on aria-label="自动滚动"><AutoScroll /></Tool>
          <Tool aria-label="图表平移"><Shift /></Tool>
          <ToolSep $w={6} />
          <Drop label="指标" icon={<Indicators />} />
          <Drop label="周期" icon={<ClockIcon />} />
          <Drop label="模板" icon={<Template />} />
        </ToolGroup>
        <Corner>
          <I s={16}><circle cx="11" cy="6" r="4.500" fill="#dde8fa" stroke="#3a58b0" strokeWidth="1.800" /><path d="M8 9.500L2 16" stroke="#3a58b0" strokeWidth="3.200" /></I>
          <svg width="20" height="18" viewBox="0 0 20 18" fill="#f4f4f6" stroke="#777">
            <path d="M14 1c9 0 9 9 1 9l-1 2-1-2C6 9 6 1 14 1z" /><path d="M6 6c7 0 7 7 1 7.500L4 16v-3C-1 12 0 6 6 6z" />
          </svg>
        </Corner>
      </ToolRow>
      <ToolRow $h={25}>
        <ToolGroup>
          <Grip $w={5} />
          <Tool $w={26} $on aria-label="指针"><CursorIcon /></Tool>
          <Tool aria-label="十字线"><CrossIcon /></Tool>
          <ToolSep $w={5} />
          <Tool aria-label="垂直线"><Stroke d="M9 2v14" /></Tool>
          <Tool aria-label="水平线"><Stroke d="M3 9h12" /></Tool>
          <Tool aria-label="趋势线"><Stroke d="M3 15L15 3" /></Tool>
          <Tool aria-label="通道"><Channel /></Tool>
          <Tool aria-label="斐波那契"><Fibo /></Tool>
          <Tool aria-label="文字"><TextA /></Tool>
          <Tool aria-label="文本标签"><TextT /></Tool>
          <Drop label="箭头" icon={<Arrows />} />
        </ToolGroup>
        <ToolGroup>
          <Grip $w={5} />
          {periods.map((p) => <Period key={p} $on={p === "H1"}>{p}</Period>)}
        </ToolGroup>
      </ToolRow>
    </>
  );
}

function MarketWatch() {
  return (
    <Panel>
      <PanelHead $active>
        <PanelTitle $active>市场报价: 09:48:51</PanelTitle>
        <PanelClose aria-label="关闭"><SmallX /></PanelClose>
      </PanelHead>
      <PanelBody $h={256}>
        <Quotes>
          <colgroup><col width="98" /><col width="65" /><col width="65" /><col /></colgroup>
          <thead><tr><th>交易品种</th><th>卖价</th><th>买价</th><th>!</th></tr></thead>
          <tbody>
            {quotes.map(([s, bid, ask, spread, up, tone]) => (
              <QuoteRow key={s} $tone={tone}>
                <td><SymbolCell><Quote up={up} />{s}</SymbolCell></td>
                <td>{bid}</td><td>{ask}</td><td>{spread}</td>
              </QuoteRow>
            ))}
          </tbody>
        </Quotes>
        <Scrollbar offset={0} thumb={28} />
      </PanelBody>
      <PanelTabs><PanelTab $on>交易品种</PanelTab><PanelTab>即时图</PanelTab></PanelTabs>
    </Panel>
  );
}

function Navigator() {
  return (
    <Panel>
      <PanelHead>
        <PanelTitle>导航</PanelTitle>
        <PanelClose aria-label="关闭"><SmallX /></PanelClose>
      </PanelHead>
      <PanelBody $h={90}>
        <Tree>
          <TreeRow><Branch w={20} d="M6.500 0v17" /><Expander minus /><Branch w={4} d="M0 8.500h4" /><ServerIcon /><TreeLabel $account>ACYFX-Demo</TreeLabel></TreeRow>
          <TreeRow><Branch w={57} d="M6.500 0v17M45.500 0v8.500h11" /><PersonIcon /><TreeLabel $account>133144: gfdgfdgdfgfd</TreeLabel></TreeRow>
          <TreeRow><Branch w={2} d="" /><Expander /><Branch w={2} d="M0 8.500h2" /><FunctionIcon /><TreeLabel>技术指标</TreeLabel></TreeRow>
          <TreeRow><Branch w={2} d="" /><Expander /><Branch w={2} d="M0 8.500h2" /><ExpertIcon /><TreeLabel>EA交易</TreeLabel></TreeRow>
          <TreeRow><Branch w={2} d="" /><Expander /><Branch w={2} d="M0 8.500h2" /><ScriptIcon /><TreeLabel>脚本</TreeLabel></TreeRow>
        </Tree>
        <Scrollbar offset={17} thumb={38} />
      </PanelBody>
      <PanelTabs><PanelTab $on>常用</PanelTab><PanelTab>收藏夹</PanelTab></PanelTabs>
    </Panel>
  );
}

function TerminalPanel() {
  return (
    <Terminal>
      <TerminalSide>
        <button aria-label="关闭"><SmallX /></button>
        <TerminalStrip><Vertical>终端</Vertical></TerminalStrip>
      </TerminalSide>
      <TerminalMain>
        <Orders>
          <colgroup>
            {[122, 171, 86, 66, 85, 96, 95, 95, 96, 95, 95].map((w, i) => <col key={i} width={w} />)}
            <col />
          </colgroup>
          <thead>
            <tr>
              <th><Inline $gap={8}>订单 <svg width="4" height="7" viewBox="0 0 4 7"><path d="M.5 6.500l2.500-6" stroke="#999" /></svg></Inline></th>
              {orderHeads.map((h, i) => <th key={i}>{h}</th>)}
            </tr>
          </thead>
          <tbody>
            <OrderRow>
              <td><Inline $gap={4} $pl={2}>
                <I s={14}><path d="M2 1h8l4 4v12H2z" fill="#fff" stroke="#789" /><circle cx="12.500" cy="12.500" r="4.500" fill="#e8482c" stroke="#a02a14" /></I>
                2330325</Inline></td>
              {orderCells.map((c, i) => <td key={i}>{c}</td>)}
              <td><Inline $end $gap={8}>-19.00<svg width="13" height="13" viewBox="0 0 13 13"><path d="M1 1l11 11M12 1L1 12" stroke="#7b8ea4" strokeWidth="1.400" /></svg></Inline></td>
            </OrderRow>
            <BalanceRow>
              <td colSpan="11"><Inline $gap={4} $pl={2}>
                <I s={14}><path d="M2 1h14v16H2z" fill="#f4f4f4" stroke="#888" /><path d="M9 15L4.500 10H7V4h4v6h2.500z" fill="#e8502c" stroke="#a02a14" /></I>
                <Inline $gap={9}>{balance.map((b) => <span key={b}>{b}</span>)}</Inline>
              </Inline></td>
              <td>-19.00</td>
            </BalanceRow>
          </tbody>
        </Orders>
        <TerminalTabs>
          {terminalTabs.map((t) => (
            <TerminalTab key={t} $on={t === "交易"}>{t}{t === "邮箱" && <MailCount>4</MailCount>}</TerminalTab>
          ))}
        </TerminalTabs>
      </TerminalMain>
    </Terminal>
  );
}

function Tasks() {
  return (
    <Taskbar>
      <TaskButton $w={33} aria-label="开始">
        <I s={17}><path d="M0 3l7.500-1v6.500H0zM8.500 1.800L18 .5v8H8.500zM0 9.500h7.500V16L0 15zM8.500 9.500H18v8l-9.500-1.300z" fill="#fff" /></I>
      </TaskButton>
      <TaskButton $w={48} $ml={7} aria-label="搜索"><I><circle cx="9" cy="9" r="7" stroke="#fff" strokeWidth="2" /></I></TaskButton>
      <TaskButton $w={47} aria-label="任务视图">
        <I><path d="M1.500 1v2.500h10V1M1.500 17v-2.500h10V17M1.500 6h10v6h-10zM15.500 1v5M15.500 9v8M14.500 7.500h2" stroke="#ddd" strokeWidth="1.400" /></I>
      </TaskButton>
      <TaskDivider $ml={7} />
      <TaskButton $w={39} $ml={17} $run aria-label="Edge">
        <svg width="22" height="24" viewBox="0 0 22 24"><path d="M1 11C2 3 7 1 11.500 1 18 1 21 6 21 11v3H8c0 4 3 6 7 6 2 0 4-.6 5-1.300V23c-2 1-4 1-6 1-7 0-11-5-11-10 0-3 2-5.500 4-7-3 1-5 2-6 4zM8 10.500h7.500C15.500 8 14 6 11.800 6 9.500 6 8 8 8 10.500z" fill="#1584d8" /></svg>
      </TaskButton>
      <TaskButton $w={49} $ml={5} $run $on aria-label="ACY">
        <svg width="24" height="25" viewBox="0 0 24 25" fill="none">
          <path d="M0 0h24v25H0z" fill="#fff" />
          <text x="1" y="17" fontFamily="Open Sans" fontWeight="800" fontSize="10" fill="#16265c">AC</text>
          <path d="M16 9l2.500 3.500M23 9l-4.500 8" stroke="#9aa4b4" strokeWidth="1.800" />
        </svg>
      </TaskButton>
      <Tray>
        <TaskDivider />
        <ImeBadge>M</ImeBadge>
        <TrayButton aria-label="人脉">
          <I><circle cx="12" cy="4" r="2.800" stroke="#fff" strokeWidth="1.300" /><path d="M8.500 10c1-3 6-3 7.500 1" stroke="#fff" strokeWidth="1.300" /><circle cx="6" cy="9" r="2.800" stroke="#fff" strokeWidth="1.300" /><path d="M1.500 17c.5-6 8.500-6 9 0" stroke="#fff" strokeWidth="1.300" /></I>
        </TrayButton>
        <TraySpace />
        <TrayButton aria-label="隐藏的图标"><svg width="12" height="8" viewBox="0 0 12 8" fill="none"><path d="M.5 7L6 1.500 11.500 7" stroke="#fff" strokeWidth="1.300" /></svg></TrayButton>
        <TrayButton aria-label="云">
          <I><path d="M4 13C0 13 0 8 4 8c1-5 8-5 9-1 4 0 4 6 0 6z" fill="#b8b8b8" /><circle cx="13" cy="12.500" r="4.500" fill="#d81e2c" /><path d="M11 10.500l4 4M15 10.500l-4 4" stroke="#fff" strokeWidth="1.200" /></I>
        </TrayButton>
        <TrayButton aria-label="电源"><I><path d="M5 5h11v8H5z" fill="#fff" /><path d="M17 7.500v3M2 3v3M4.500 2.500v3M1 6h5M3.500 6v4h2" stroke="#fff" strokeWidth="1.400" /></I></TrayButton>
        <TrayButton aria-label="通知">
          <I><path d="M1.500 3l14-1.500v13L1.500 14z" stroke="#fff" strokeWidth="1.300" /><path d="M5 5.500h7v6H5z" stroke="#ccc" strokeWidth="1.500" /><circle cx="13" cy="13" r="4.500" fill="#d81e2c" /><path d="M13 10v3.500M13 14.500v1.200" stroke="#fff" strokeWidth="1.300" /></I>
        </TrayButton>
        <TrayButton aria-label="网络">
          <I><path d="M3 16C3 9 8 4 15 4M6 16c0-5 4-9 9-9M9 16c0-3 3-6 6-6" stroke="#bbb" strokeWidth="1.300" /><path d="M12 16c0-2 1-3 3-3v3z" fill="#fff" /></I>
        </TrayButton>
        <TrayButton aria-label="音量">
          <I s={16}><path d="M1.500 6.500h3L9 2.500v13L4.500 11.500h-3z" stroke="#fff" strokeWidth="1.300" /><path d="M11 6.500c1.500 1.500 1.500 3.500 0 5M13 4.500c3 3 3 6 0 9M15.200 3c3.500 4 3.500 8 0 12" stroke="#ddd" strokeWidth="1.100" /></I>
        </TrayButton>
        <Clock dateTime="2019-11-06T15:48">15:48<br />2019/11/6</Clock>
        <NoticeButton aria-label="操作中心">
          <I><path d="M1 2h16v11h-8l-3.500 4v-4H1z" fill="#fff" /><path d="M3.500 5h11M3.500 7.500h11M3.500 10h6" stroke="#555" /><path d="M13 9c0 3 1.500 4.500 4.500 4.500-1 4-7 3.500-7 0 0-2 1-3.500 2.500-4.500z" fill="#ddd" stroke="#333" strokeWidth=".8" /></I>
        </NoticeButton>
      </Tray>
    </Taskbar>
  );
}

export default function App() {
  return (
    <Desktop>
      <Global />
      <Window>
        <TitleBar>
          <LogoMark w={16} h={7} />
          <Title>133144: ACYFX-Demo - 模拟帐户 - [XAUUSDzero,H1]</Title>
          <Captions>
            <Caption aria-label="最小化"><svg width="10" height="10" viewBox="0 0 10 10"><path d="M0 5.500h10" stroke="#444" /></svg></Caption>
            <Caption aria-label="最大化"><svg width="10" height="10" viewBox="0 0 10 10" fill="none"><path d="M.5.5h9v9h-9z" stroke="#444" /></svg></Caption>
            <Caption aria-label="关闭"><svg width="10" height="10" viewBox="0 0 10 10"><path d="M0 0l10 10M10 0L0 10" stroke="#333" strokeWidth="1.200" /></svg></Caption>
          </Captions>
        </TitleBar>
        <MenuBar>
          <I s={17}><path d="M.5 1.500h12v9H.5z" fill="#e8f1fc" stroke="#5a8ec8" /><path d="M5.500 7.500h12v10h-12z" fill="#e8f1fc" stroke="#5a8ec8" /><path d="M1 2.500h11M6 8.500h11" stroke="#5a98dc" strokeWidth="2" /><path d="M7 12l2 3 2-2 2 2 2-3M2 6h3v2" stroke="#2a62a8" /></I>
          {menus.map((m) => <a key={m} href="#menu">{m}</a>)}
          <ChildCaptions>
            <ChildCaption aria-label="最小化子窗口"><svg width="5" height="7" viewBox="0 0 5 7"><path d="M0 5.500h5" stroke="#333" strokeWidth="1.500" /></svg></ChildCaption>
            <ChildCaption aria-label="还原子窗口"><svg width="6" height="6" viewBox="0 0 6 6" fill="none"><path d="M.5 2.500h3v3h-3zM2 .5h3.500v3H4" stroke="#333" /></svg></ChildCaption>
            <ChildCaption $w={11} aria-label="关闭子窗口"><SmallX /></ChildCaption>
          </ChildCaptions>
        </MenuBar>
        <Toolbars />
        <Workspace>
          <Side>
            <MarketWatch />
            <Navigator />
          </Side>
          <ChartArea>
            <PriceChart />
            <ChartTabs>
              <ChartTab>WTICOUSD,Weekly</ChartTab>
              <ChartTab>USDJPY,M30</ChartTab>
              <ChartTab>EURUSD,M30</ChartTab>
              <ChartTab>AUDUSD,Daily</ChartTab>
              <ChartTab $on>XAUUSDzero,H1</ChartTab>
              <TabSpace />
              <ChartTab>CADCHF,H1</ChartTab>
              <ChartTab>GBPJPY,H1</ChartTab>
              <ChartTab>CHINA50,H1</ChartTab>
              <TabArrows>
                <ArrowButton aria-label="上一个"><svg width="4" height="7" viewBox="0 0 4 7"><path d="M4 0v7L0 3.500z" fill="#999" /></svg></ArrowButton>
                <ArrowButton aria-label="下一个"><svg width="4" height="7" viewBox="0 0 4 7"><path d="M0 0v7l4-3.500z" fill="#999" /></svg></ArrowButton>
              </TabArrows>
            </ChartTabs>
          </ChartArea>
        </Workspace>
        <TerminalPanel />
      </Window>
      <Tasks />
      <Timer>06:49</Timer>
      <ContextMenu role="menu">
        {contextItems.map((it, i) =>
          it ? (
            <MenuItem key={i} role="menuitem" $sub={it.sub}>
              {it.icon || <span />}
              <MenuLabel>{it.label}</MenuLabel>
              {it.sub ? <SubArrow /> : <span>{it.hint}</span>}
            </MenuItem>
          ) : (
            <MenuRule key={i} />
          )
        )}
      </ContextMenu>
      <Pointer>
        <svg width="13" height="20" viewBox="0 0 13 20"><path d="M1 1v15l3.500-3L7 19l2.500-1L7 12.500h5z" fill="#fff" stroke="#444" strokeWidth=".8" /></svg>
      </Pointer>
    </Desktop>
  );
}
